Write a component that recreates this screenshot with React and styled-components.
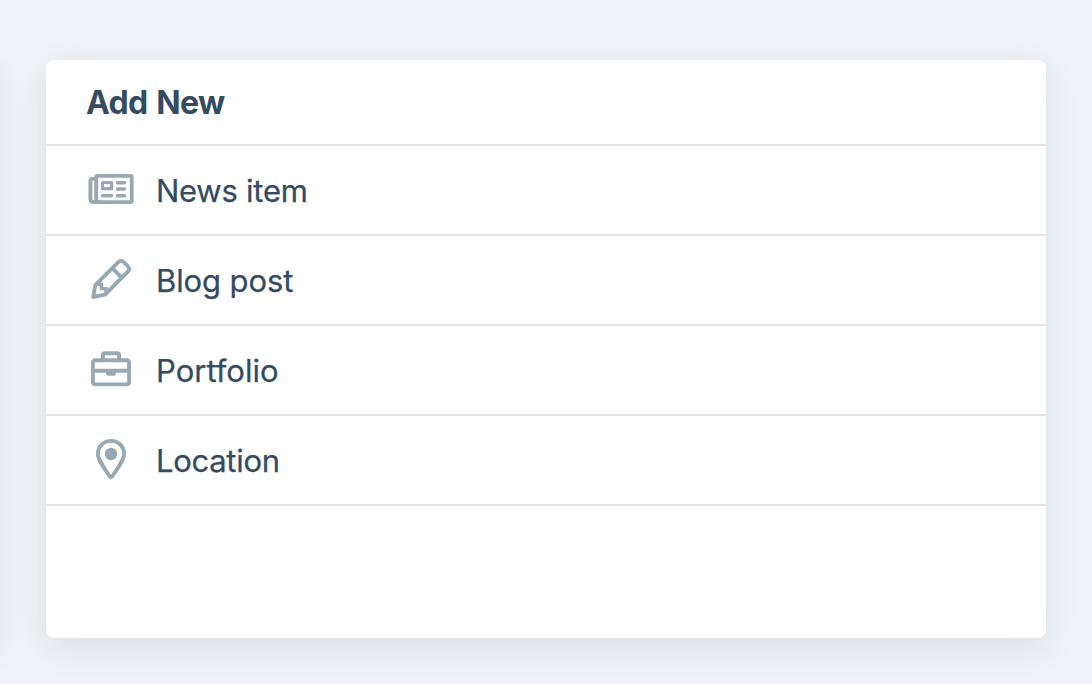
import React from "react";
import styled, { createGlobalStyle } from "styled-components";

const GlobalStyle = createGlobalStyle`
  * { box-sizing: border-box; }
  body {
    margin: 0;
    background: #eff3f8;
    overflow: hidden;
    font-family: Inter, "Liberation Sans", sans-serif;
    color: #344b61;
  }
`;

const Dashboard = styled.main`
  display: flex;
  gap: 48px;
  width: 100%;
  height: 684px;
  padding-top: 60px;
  overflow: hidden;
`;

const Widget = styled.section`
  flex: none;
  width: 1000px;
  height: 578px;
  border-radius: 8px;
  background: #fff;
  box-shadow: 0 10px 34px rgba(31, 41, 36, 0.095);
`;

const PreviousWidget = styled(Widget)`
  margin-left: -1003px;
  margin-right: 1px;
`;

const Header = styled.header`
  display: flex;
  align-items: center;
  height: 86px;
  padding: 2px 40px 0;
  border-bottom: 2px solid #e4e4e4;
`;

const Title = styled.h2`
  margin: 0;
  font-size: 32px;
  line-height: 40px;
  font-weight: 700;
  letter-spacing: -0.7px;
  word-spacing: 2px;
`;

const List = styled.ul`
  margin: 0;
  padding: 0;
  list-style: none;
`;

const Item = styled.li`
  display: flex;
  align-items: center;
  gap: 22px;
  height: 90px;
  padding: 0 42px;
  border-bottom: 2px solid #e4e4e4;
`;

const Label = styled.span`
  padding-top: 2px;
  font-size: 31px;
  line-height: 40px;
  font-variant-ligatures: none;
  letter-spacing: ${(p) => p.$tracking};
  -webkit-text-stroke: 0.25px currentColor;
`;

const Icon = styled.svg`
  flex: none;
  width: 46px;
  height: 46px;
  fill: none;
  stroke: #98a9b3;
  stroke-width: 3.9;
  stroke-linejoin: round;
  stroke-linecap: round;
`;

const Newspaper = () => (
  <Icon viewBox="0 0 46 46">
    <rect x="8.2" y="8.9" width="35.5" height="26.2" rx="1.2" />
    <path d="M8 11.9H4.2q-1.8 0-1.8 1.8V32q0 3.1 3 3.1H11" />
    <rect x="14.5" y="15.5" width="9.2" height="6.2" strokeWidth="3.2" />
    <path d="M29.5 15.7h7M29.5 22h7M14.5 28.7h9M29.5 28.7h7" strokeWidth="3.5" />
  </Icon>
);

const Pencil = () => (
  <Icon viewBox="0 0 46 46">
    <path d="M7.3 28.2 30.3 5.2q2.8-2.7 5.6 0l3.9 3.9q2.7 2.8 0 5.6L17 37.7 5.2 40Z" />
    <path d="m24.5 11.4 9.2 9.2" strokeLinecap="butt" />
    <path d="M9.5 27.2h3.9v4.4h4.6v4" strokeWidth="3.4" strokeLinecap="butt" strokeLinejoin="miter" />
  </Icon>
);

const Briefcase = () => (
  <Icon viewBox="0 0 46 46">
    <rect x="4.9" y="13.2" width="36.2" height="24.2" rx="2.3" />
    <path d="M14.9 13.2V8q0-1.7 1.7-1.7h12.8q1.7 0 1.7 1.7v5.2M5 23.8h36" />
    <path d="M18 23.4h10v3.1q0 2.2-2.2 2.2h-5.6q-2.2 0-2.2-2.2Z" fill="#98a9b3" stroke="none" />
  </Icon>
);

const MapMarker = () => (
  <Icon viewBox="0 0 46 46">
    <path d="M23 3.9c-7.4 0-13.1 5.7-13.1 13.1 0 5 4.7 11.6 11.4 21.8q1.7 2.3 3.4 0C31.4 28.6 36.1 22 36.1 17 36.1 9.6 30.4 3.9 23 3.9Z" />
    <circle cx="23" cy="17" r="6.2" fill="#98a9b3" stroke="none" />
  </Icon>
);

const items = [
  { label: "News item", icon: Newspaper, tracking: "-0.25px" },
  { label: "Blog post", icon: Pencil, tracking: "-0.1px" },
  { label: "Portfolio", icon: Briefcase, tracking: "0" },
  { label: "Location", icon: MapMarker, tracking: "-0.3px" },
];

export default function App() {
  return (
    <>
      <GlobalStyle />
      <Dashboard>
        <PreviousWidget aria-hidden="true" />
        <Widget>
          <Header>
            <Title>Add New</Title>
          </Header>
          <List>
            {items.map(({ label, icon: Glyph, tracking }) => (
              <Item key={label}>
                <Glyph />
                <Label $tracking={tracking}>{label}</Label>
              </Item>
            ))}
          </List>
        </Widget>
      </Dashboard>
    </>
  );
}
